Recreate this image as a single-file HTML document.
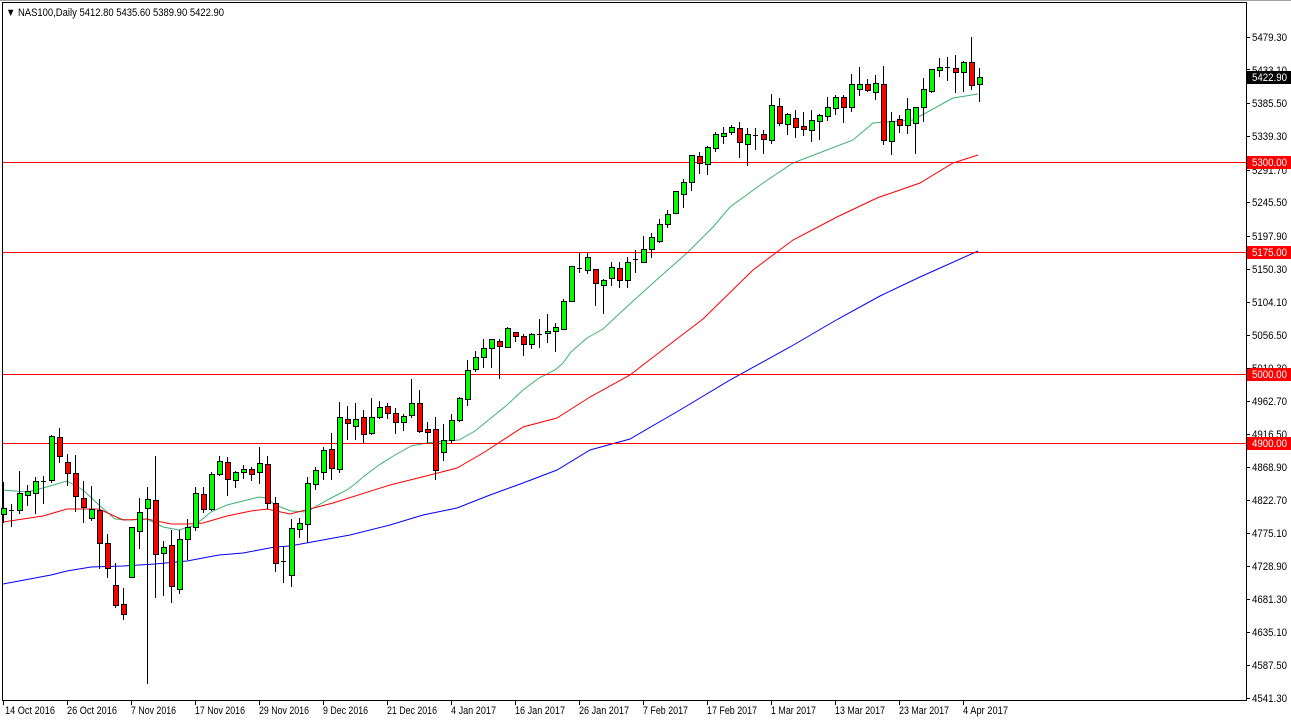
<!DOCTYPE html>
<html><head><meta charset="utf-8"><style>
html,body{margin:0;padding:0;background:#fff;width:1291px;height:721px;overflow:hidden}
svg{display:block;font-family:"Liberation Sans",sans-serif;font-size:11px}
</style></head><body>
<svg id="s" width="1291" height="721" viewBox="0 0 1291 721" shape-rendering="crispEdges">
<rect x="0" y="0" width="1291" height="721" fill="#fff"/>
<rect x="0" y="0" width="1291" height="1" fill="#a0a0a0"/>
<rect x="2.5" y="2.5" width="1244" height="698" fill="none" stroke="#000"/>
<g id="ma" fill="none" shape-rendering="auto"></g>
<g stroke="#ff0000" stroke-width="1">
<line x1="3" y1="162.5" x2="1246" y2="162.5"/>
<line x1="3" y1="252.5" x2="1246" y2="252.5"/>
<line x1="3" y1="374.5" x2="1246" y2="374.5"/>
<line x1="3" y1="443.5" x2="1246" y2="443.5"/>
</g>
<g id="c"></g>
<text x="6" y="16" fill="#000" textLength="218" lengthAdjust="spacingAndGlyphs">▼ NAS100,Daily  5412.80 5435.60 5389.90 5422.90</text>
<g fill="#000" id="ax">
<text x="1252" y="41">5479.30</text>
<text x="1252" y="74">5433.10</text>
<text x="1252" y="107">5385.50</text>
<text x="1252" y="140">5339.30</text>
<text x="1252" y="174">5291.70</text>
<text x="1252" y="206">5245.50</text>
<text x="1252" y="240">5197.90</text>
<text x="1252" y="273">5150.30</text>
<text x="1252" y="306">5104.10</text>
<text x="1252" y="339">5056.50</text>
<text x="1252" y="372">5010.30</text>
<text x="1252" y="405">4962.70</text>
<text x="1252" y="438">4916.50</text>
<text x="1252" y="471">4868.90</text>
<text x="1252" y="504">4822.70</text>
<text x="1252" y="537">4775.10</text>
<text x="1252" y="570">4728.90</text>
<text x="1252" y="603">4681.30</text>
<text x="1252" y="636">4635.10</text>
<text x="1252" y="669">4587.50</text>
<text x="1252" y="702">4541.30</text>
</g>
<rect x="1247" y="71" width="44" height="13" fill="#000"/>
<text x="1252" y="81" fill="#fff" class="p">5422.90</text>
<rect x="1247" y="156" width="44" height="13" fill="#ff0000"/>
<text x="1252" y="166" fill="#fff" class="p">5300.00</text>
<rect x="1247" y="246" width="44" height="13" fill="#ff0000"/>
<text x="1252" y="256" fill="#fff" class="p">5175.00</text>
<rect x="1247" y="368" width="44" height="13" fill="#ff0000"/>
<text x="1252" y="378" fill="#fff" class="p">5000.00</text>
<rect x="1247" y="437" width="44" height="13" fill="#ff0000"/>
<text x="1252" y="447" fill="#fff" class="p">4900.00</text>
<g fill="#000" id="dt">
<text x="5" y="714">14 Oct 2016</text>
<text x="67" y="714">26 Oct 2016</text>
<text x="131" y="714">7 Nov 2016</text>
<text x="195" y="714">17 Nov 2016</text>
<text x="259" y="714">29 Nov 2016</text>
<text x="323" y="714">9 Dec 2016</text>
<text x="387" y="714">21 Dec 2016</text>
<text x="451" y="714">4 Jan 2017</text>
<text x="515" y="714">16 Jan 2017</text>
<text x="579" y="714">26 Jan 2017</text>
<text x="643" y="714">7 Feb 2017</text>
<text x="707" y="714">17 Feb 2017</text>
<text x="771" y="714">1 Mar 2017</text>
<text x="835" y="714">13 Mar 2017</text>
<text x="899" y="714">23 Mar 2017</text>
<text x="963" y="714">4 Apr 2017</text>
</g>
<g id="tk" stroke="#000"></g>
</svg>
<script>
var NS="http://www.w3.org/2000/svg";
function el(p,n,a){var e=document.createElementNS(NS,n);for(var k in a)e.setAttribute(k,a[k]);p.appendChild(e);return e;}
Array.prototype.forEach.call(document.querySelectorAll('#ax text, text.p'),function(t){t.setAttribute('textLength','35');t.setAttribute('lengthAdjust','spacingAndGlyphs');});
Array.prototype.forEach.call(document.querySelectorAll('#dt text'),function(t){var n=t.textContent.length;t.setAttribute('textLength',String(n==11?50:45));t.setAttribute('lengthAdjust','spacingAndGlyphs');});
var D=[[508,514,482,522,'g'],[510,510,504,526,'d'],[493,510,471,513,'g'],[491,495,485,505,'g'],[481,493,477,513,'g'],[481,481,476,503,'d'],[436,480,435,482,'g'],[437,456,428,462,'r'],[462,473,454,485,'r'],[473,496,455,511,'r'],[498,507,481,522,'r'],[509,518,486,520,'g'],[510,543,499,568,'r'],[543,568,534,577,'r'],[585,605,563,607,'r'],[604,614,588,619,'r'],[527,577,527,577,'g'],[512,531,498,548,'g'],[499,508,487,683,'g'],[500,554,456,597,'r'],[547,553,541,595,'g'],[545,586,530,602,'r'],[539,589,530,593,'g'],[527,539,519,559,'g'],[493,527,487,530,'g'],[494,509,487,512,'r'],[474,509,472,510,'g'],[461,474,456,475,'g'],[462,479,457,495,'r'],[472,480,471,487,'g'],[469,472,465,478,'g'],[469,474,467,480,'r'],[463,472,447,483,'g'],[464,503,456,508,'r'],[503,563,497,571,'r'],[561,561,546,582,'d'],[528,575,519,586,'g'],[523,529,518,537,'g'],
[483,524,477,542,'g'],[470,484,467,489,'g'],[450,472,447,479,'g'],[449,468,433,479,'r'],[417,469,402,472,'g'],[419,423,406,439,'r'],[419,426,403,439,'g'],[417,434,410,442,'r'],[417,433,398,434,'g'],[407,417,401,418,'g'],[406,413,403,418,'r'],[413,422,408,433,'r'],[416,422,414,430,'g'],[403,415,379,417,'g'],[403,431,390,432,'r'],[429,432,422,442,'r'],[429,470,417,479,'r'],[440,452,424,460,'g'],[420,440,414,442,'g'],[398,420,397,421,'g'],[370,399,360,405,'g'],[357,369,351,371,'g'],[348,357,339,367,'g'],[339,348,339,367,'g'],[341,346,339,378,'r'],[328,347,327,347,'g'],[332,336,332,341,'r'],[336,344,334,355,'r'],[334,344,333,348,'g'],[334,334,319,347,'d'],[331,333,314,342,'g'],[327,331,323,351,'g'],[301,329,299,329,'g'],[266,301,266,301,'g'],[268,268,253,272,'d'],[257,270,253,273,'g'],[269,283,269,305,'r'],[280,285,279,313,'g'],[267,278,262,285,'g'],[268,280,262,287,'r'],[262,280,257,287,'g'],
[259,259,250,272,'d'],[249,262,236,262,'g'],[237,249,233,257,'g'],[224,241,219,242,'g'],[214,224,210,227,'g'],[191,213,191,213,'g'],[182,194,179,207,'g'],[155,182,155,190,'g'],[156,163,152,173,'r'],[147,164,146,174,'g'],[134,148,132,151,'g'],[133,136,127,143,'g'],[127,132,125,134,'g'],[128,142,122,157,'r'],[134,144,128,165,'g'],[135,135,128,149,'d'],[134,139,130,153,'r'],[105,140,94,143,'g'],[106,123,98,125,'r'],[114,124,113,134,'g'],[118,127,110,137,'r'],[126,129,112,135,'r'],[120,130,110,141,'g'],[115,121,114,139,'g'],[107,116,97,120,'g'],[97,108,95,114,'g'],[97,107,95,122,'r'],[84,107,74,111,'g'],[84,89,67,95,'g'],[84,90,79,91,'r'],[83,92,75,99,'g'],[84,140,66,144,'r'],[121,141,112,154,'g'],[119,125,115,132,'r'],[109,125,98,133,'g'],[107,123,107,153,'g'],[89,107,78,121,'g'],[69,91,69,92,'g'],[67,70,58,76,'g'],[67,67,57,80,'d'],[68,72,55,92,'r'],[62,72,61,91,'g'],[62,85,37,89,'r'],[77,84,68,101,'g']];
var g=document.getElementById('c');
D.forEach(function(d,i){var x=3+8*i;
el(g,'line',{x1:x+.5,y1:d[2],x2:x+.5,y2:d[3]+1,stroke:'#000'});
if(d[4]=='d'){el(g,'line',{x1:x-2,y1:d[0]+.5,x2:x+3,y2:d[0]+.5,stroke:'#000'});}
else el(g,'rect',{x:x-2+.5,y:d[0]+.5,width:5,height:Math.max(1,d[1]-d[0]),fill:d[4]=='g'?'#00ff00':'#ff0000',stroke:'#000'});
});
var ma=document.getElementById('ma');
function pl(pts,c){el(ma,'polyline',{points:pts.map(function(p){return p.join(',')}).join(' '),stroke:c,'stroke-width':1});}
pl([[3,490],[27,492],[43,488],[67,481],[83,490],[99,505],[115,519],[131,520],[147,519],[163,527],[179,530],[195,525],[211,512],[227,505],[243,501],[259,497],[267,498],[275,505],[291,511],[307,512],[315,507],[331,498],[347,490],[355,484],[363,477],[379,465],[395,455],[411,446],[427,443],[443,441],[459,440],[475,431],[491,418],[507,405],[523,390],[539,378],[555,370],[563,363],[571,352],[587,338],[603,329],[620,313],[653,283],[687,253],[713,227],[730,207],[763,183],[793,163],[853,140],[873,123],[913,120],[953,98],[978,94]],'#3cb371');
pl([[3,522],[43,516],[67,509],[99,509],[123,520],[147,519],[171,524],[187,524],[203,523],[227,516],[251,511],[267,509],[290,514],[333,503],[390,485],[430,475],[457,468],[483,453],[523,427],[557,418],[590,397],[630,375],[665,348],[703,319],[753,270],[793,240],[837,217],[877,198],[920,183],[953,163],[978,155]],'#ff0000');
pl([[3,584],[51,575],[67,571],[91,567],[123,566],[155,564],[187,561],[219,555],[243,553],[259,550],[275,547],[290,546],[350,535],[390,525],[423,515],[457,508],[490,495],[523,483],[557,470],[590,450],[630,439],[680,410],[730,380],[790,347],[838,319],[880,296],[920,277],[978,251]],'#0000ff');
var tk=document.getElementById('tk');
[3,67,131,195,259,323,387,451,515,579,643,707,771,835,899,963].forEach(function(x){el(tk,'line',{x1:x+.5,y1:700,x2:x+.5,y2:705});});
[37,69,103,136,170,202,236,269,302,335,368,401,434,467,500,533,566,599,632,665,698].forEach(function(y){el(tk,'line',{x1:1246,y1:y+.5,x2:1250,y2:y+.5});});
</script>
</body></html>
